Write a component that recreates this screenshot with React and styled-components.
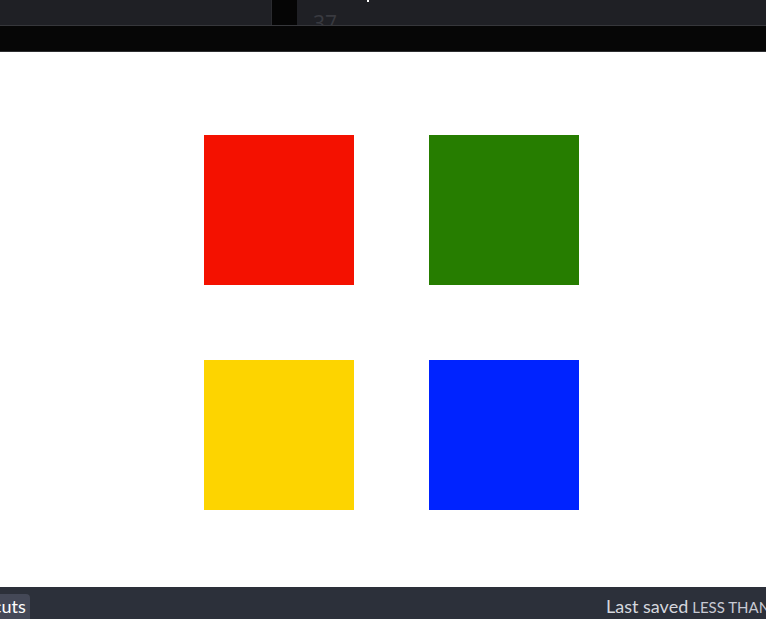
import React from "react";
import styled, { createGlobalStyle } from "styled-components";

const Global = createGlobalStyle`
  html, body { margin: 0; padding: 0; background: #ffffff; overflow: hidden; }
  body { font-family: Lato, "Liberation Sans", sans-serif; }
`;

const Page = styled.div`
  width: 766px;
  height: 619px;
  display: flex;
  flex-direction: column;
  overflow: hidden;
`;

const TopBar = styled.div`
  height: 25px;
  flex: 0 0 25px;
  background: #1f2025;
  border-bottom: 1px solid #36373b;
  display: flex;
  overflow: hidden;
`;

const TopLeft = styled.div`
  width: 271px;
  flex: 0 0 271px;
`;

const Gutter = styled.div`
  width: 25px;
  flex: 0 0 25px;
  background: #050505;
  border-left: 1px solid #2a2b2f;
`;

const CodePane = styled.div`
  flex: 1;
  position: relative;
  padding-left: 16px;
`;

const LineNum = styled.div`
  font-family: "Open Sans", "Liberation Sans", sans-serif;
  font-size: 21px;
  line-height: 20px;
  color: #393a40;
  padding-top: 13px;
`;

const Dot = styled.span`
  position: absolute;
  left: 70px;
  top: 0;
  width: 2px;
  height: 2px;
  background: #ffffff;
`;

const Band = styled.div`
  height: 25px;
  flex: 0 0 25px;
  background: #060606;
  border-bottom: 1px solid #2e2f31;
`;

const Preview = styled.div`
  flex: 1;
  background: #ffffff;
  padding: 83px 0 0 204px;
  box-sizing: border-box;
`;

const Grid = styled.div`
  display: grid;
  grid-template-columns: repeat(2, 150px);
  grid-auto-rows: 150px;
  gap: 75px;
`;

const Square = styled.div`
  background: ${(p) => p.$color};
`;

const Footer = styled.div`
  height: 32px;
  flex: 0 0 32px;
  background: #2c303a;
  display: flex;
  align-items: flex-end;
  overflow: hidden;
  white-space: nowrap;
`;

const FooterLeft = styled.div`
  width: 606px;
  flex: 0 0 606px;
  display: flex;
  align-items: flex-end;
  overflow: hidden;
`;

const Button = styled.div`
  margin-left: -58px;
  height: 25px;
  padding: 0 4px 0 8px;
  background: #444857;
  border-radius: 0 4px 0 0;
  color: #ffffff;
  font-size: 18px;
  line-height: 25px;
`;

const Saved = styled.div`
  color: #d5d7de;
  font-size: 18px;
  line-height: 25px;
  height: 25px;
  display: flex;
  align-items: baseline;
  gap: 4px;
`;

const Small = styled.span`
  font-size: 15px;
  color: #c7c9d3;
  text-transform: uppercase;
`;

const colors = ["#f41100", "#267d00", "#fdd400", "#0023ff"];

export default function App() {
  return (
    <Page>
      <Global />
      <TopBar>
        <TopLeft />
        <Gutter />
        <CodePane>
          <LineNum>37</LineNum>
          <Dot />
        </CodePane>
      </TopBar>
      <Band />
      <Preview>
        <Grid>
          {colors.map((c) => (
            <Square key={c} $color={c} />
          ))}
        </Grid>
      </Preview>
      <Footer>
        <FooterLeft>
          <Button>Shortcuts</Button>
        </FooterLeft>
        <Saved>
          Last saved <Small>less than a minute ago</Small>
        </Saved>
      </Footer>
    </Page>
  );
}
